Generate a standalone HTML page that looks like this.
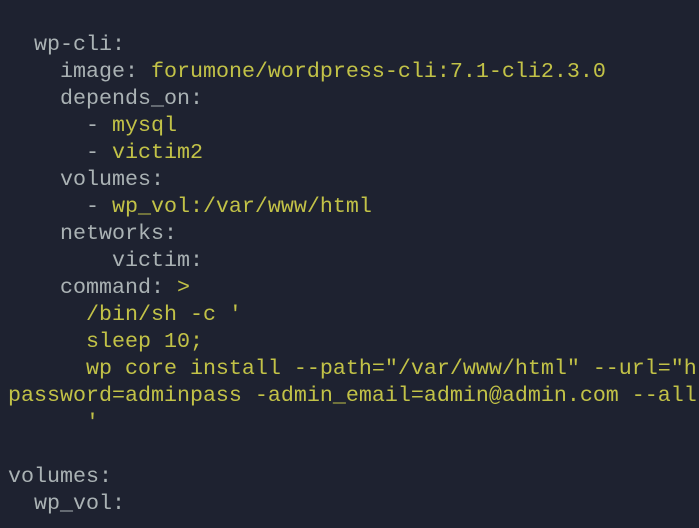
<!DOCTYPE html>
<html><head><meta charset="utf-8"><style>
html,body{margin:0;padding:0;background:#1e2230;width:699px;height:528px;overflow:hidden}
pre{margin:0;padding:31px 0 0 8px;width:691px;height:497px;overflow:hidden;font-family:"Liberation Mono",monospace;font-size:21.67px;line-height:27px;color:#aab2b4;white-space:pre}
.v{color:#c2c247}
</style></head><body><pre>  wp-cli:
    image: <span class="v">forumone/wordpress-cli:7.1-cli2.3.0</span>
    depends_on:
      - <span class="v">mysql</span>
      - <span class="v">victim2</span>
    volumes:
      - <span class="v">wp_vol:/var/www/html</span>
    networks:
        victim:
    command: <span class="v">&gt;</span>
<span class="v">      /bin/sh -c '
      sleep 10;
      wp core install --path="/var/www/html" --url="h
password=adminpass -admin_email=admin@admin.com --all
      '</span>

volumes:
  wp_vol:
</pre></body></html>
